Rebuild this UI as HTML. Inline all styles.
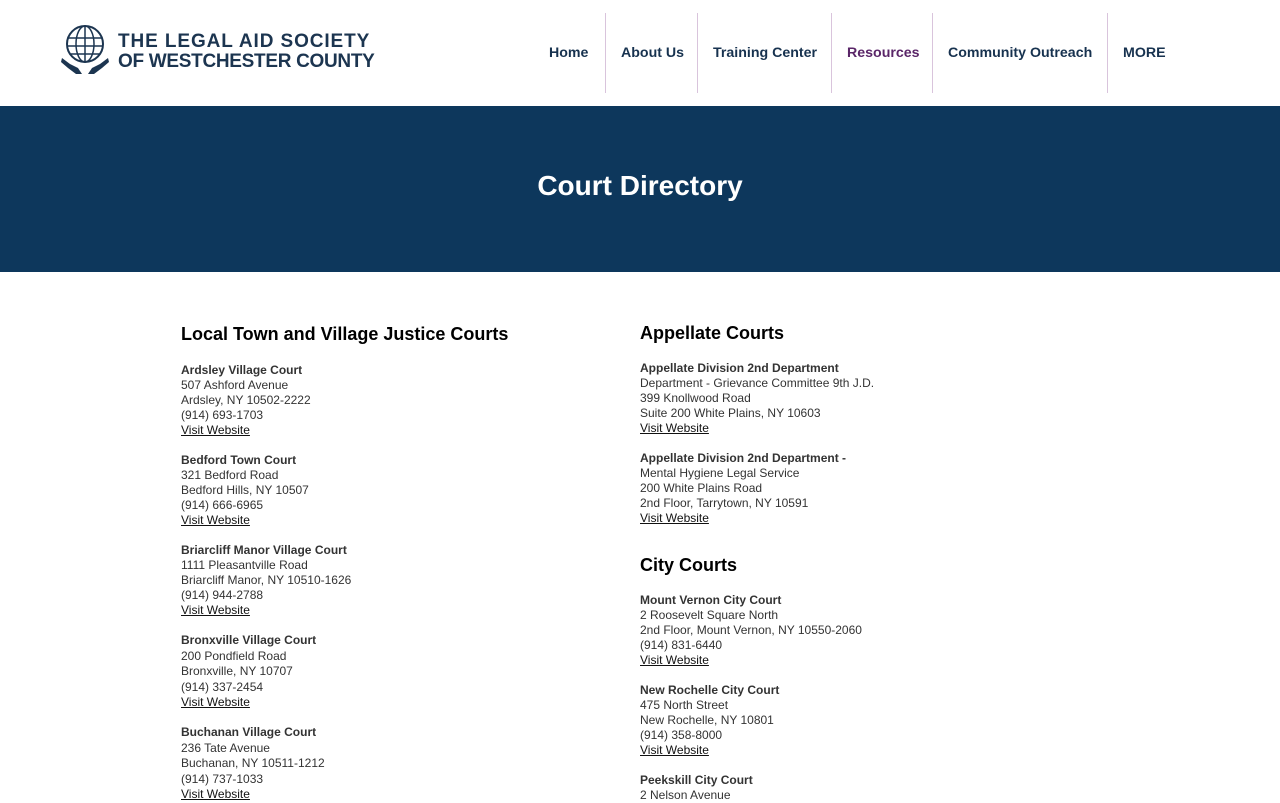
<!DOCTYPE html>
<html><head><style>
*{margin:0;padding:0;box-sizing:border-box}
body{width:1280px;height:800px;overflow:hidden;background:#fff;font-family:"Liberation Sans",Arial,sans-serif;position:relative}
.hdr{position:absolute;top:0;left:0;width:1280px;height:106px;background:#fff}
.logo{position:absolute;left:60px;top:22px}
.lt{position:absolute;left:118px;font-weight:bold;color:#1c3550;font-size:19px;white-space:nowrap}
.nav a{position:absolute;top:45px;font-size:14.2px;font-weight:bold;color:#17324f;text-decoration:none;white-space:nowrap}
.div{position:absolute;top:13px;width:1px;height:80px;background:#d9c4dc}
.ban{position:absolute;top:106px;left:0;width:1280px;height:166px;background:#0d375c}
.ban h1{position:absolute;top:64px;left:0;width:1280px;text-align:center;color:#fff;font-size:28px;font-weight:bold}
h2{position:absolute;font-size:18px;font-weight:bold;color:#000;white-space:nowrap}
.e{position:absolute;font-size:12px;line-height:15px;color:#333;white-space:nowrap}
.e u{color:#111}
</style></head><body>
<div class="hdr">
<svg class="logo" width="50" height="54" viewBox="0 0 50 54">
<circle cx="25" cy="22" r="18" fill="none" stroke="#1c3550" stroke-width="2"/>
<ellipse cx="25" cy="22" rx="9" ry="18" fill="none" stroke="#1c3550" stroke-width="1.5"/>
<line x1="25" y1="4" x2="25" y2="40" stroke="#1c3550" stroke-width="1.5"/>
<line x1="8" y1="16" x2="42" y2="16" stroke="#1c3550" stroke-width="1.5"/>
<line x1="7" y1="24" x2="43" y2="24" stroke="#1c3550" stroke-width="1.5"/>
<line x1="10" y1="32" x2="40" y2="32" stroke="#1c3550" stroke-width="1.5"/>
<path d="M2 36 L10 42 L18 46 L22 52 L16 52 L8 46 L1 40Z" fill="#1c3550"/>
<path d="M48 36 L40 42 L32 46 L28 52 L34 52 L42 46 L49 40Z" fill="#1c3550"/>
</svg>
<div class="lt" style="top:31px;letter-spacing:0.9px">THE LEGAL AID SOCIETY</div>
<div class="lt" style="top:51px;letter-spacing:-0.3px">OF WESTCHESTER COUNTY</div>
<div class="nav">
<a style="left:549px">Home</a>
<a style="left:621px">About Us</a>
<a style="left:713px">Training Center</a>
<a style="left:847px;color:#5a2668">Resources</a>
<a style="left:948px">Community Outreach</a>
<a style="left:1123px">MORE</a>
</div>
<div class="div" style="left:605px"></div>
<div class="div" style="left:697px"></div>
<div class="div" style="left:831px"></div>
<div class="div" style="left:932px"></div>
<div class="div" style="left:1107px"></div>
</div>
<div class="ban"><h1>Court Directory</h1></div>

<h2 style="left:181px;top:324px">Local Town and Village Justice Courts</h2>
<div class="e" style="left:181px;top:363px"><b>Ardsley Village Court</b><br>507 Ashford Avenue<br>Ardsley, NY 10502-2222<br>(914) 693-1703<br><u>Visit Website</u></div>
<div class="e" style="left:181px;top:453px"><b>Bedford Town Court</b><br>321 Bedford Road<br>Bedford Hills, NY 10507<br>(914) 666-6965<br><u>Visit Website</u></div>
<div class="e" style="left:181px;top:543px"><b>Briarcliff Manor Village Court</b><br>1111 Pleasantville Road<br>Briarcliff Manor, NY 10510-1626<br>(914) 944-2788<br><u>Visit Website</u></div>
<div class="e" style="left:181px;top:633px;line-height:15.5px"><b>Bronxville Village Court</b><br>200 Pondfield Road<br>Bronxville, NY 10707<br>(914) 337-2454<br><u>Visit Website</u></div>
<div class="e" style="left:181px;top:725px;line-height:15.5px"><b>Buchanan Village Court</b><br>236 Tate Avenue<br>Buchanan, NY 10511-1212<br>(914) 737-1033<br><u>Visit Website</u></div>

<h2 style="left:640px;top:323px">Appellate Courts</h2>
<div class="e" style="left:640px;top:361px"><b>Appellate Division 2nd Department</b><br>Department - Grievance Committee 9th J.D.<br>399 Knollwood Road<br>Suite 200 White Plains, NY 10603<br><u>Visit Website</u></div>
<div class="e" style="left:640px;top:451px"><b>Appellate Division 2nd Department -</b><br>Mental Hygiene Legal Service<br>200 White Plains Road<br>2nd Floor, Tarrytown, NY 10591<br><u>Visit Website</u></div>
<h2 style="left:640px;top:555px">City Courts</h2>
<div class="e" style="left:640px;top:593px"><b>Mount Vernon City Court</b><br>2 Roosevelt Square North<br>2nd Floor, Mount Vernon, NY 10550-2060<br>(914) 831-6440<br><u>Visit Website</u></div>
<div class="e" style="left:640px;top:683px"><b>New Rochelle City Court</b><br>475 North Street<br>New Rochelle, NY 10801<br>(914) 358-8000<br><u>Visit Website</u></div>
<div class="e" style="left:640px;top:773px"><b>Peekskill City Court</b><br>2 Nelson Avenue</div>
</body></html>
